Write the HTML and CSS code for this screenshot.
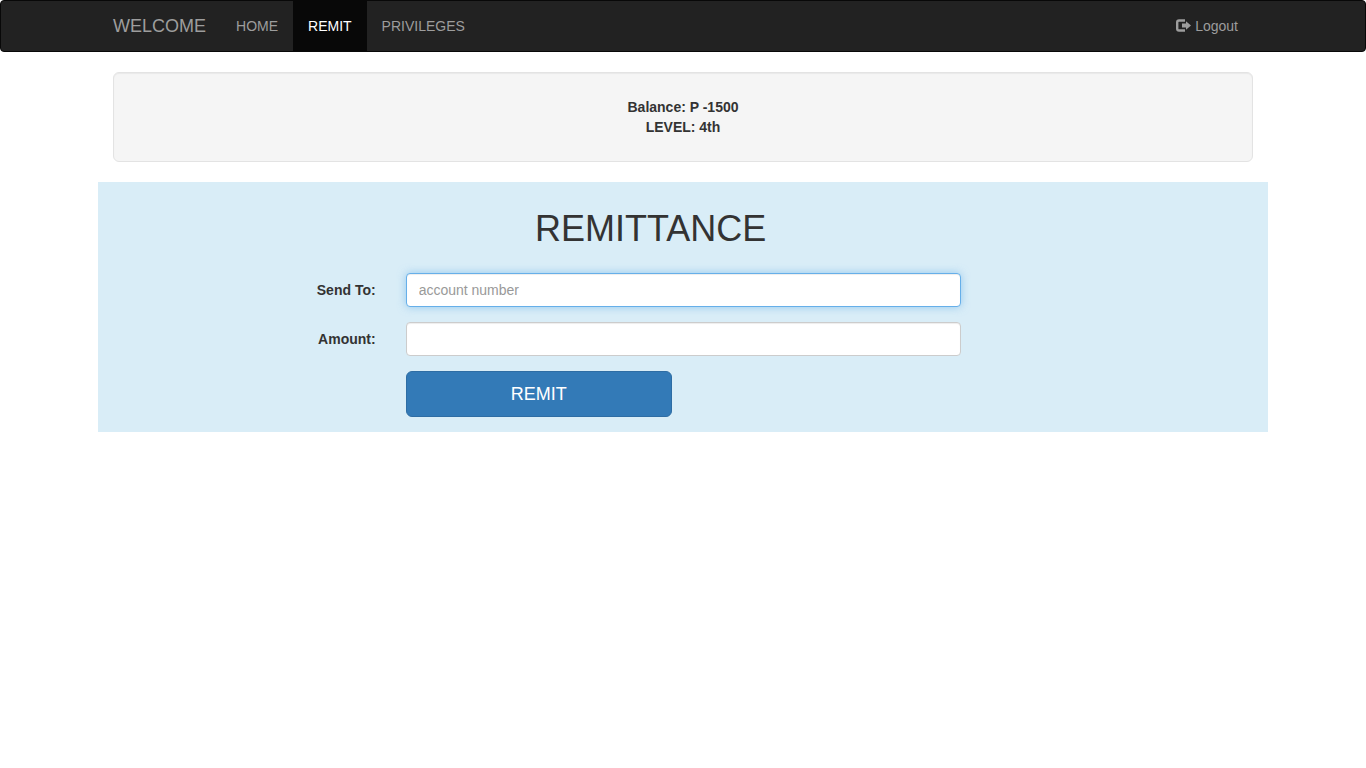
FILE: index.html
```html
<!DOCTYPE html>
<html lang="en">
<head>
<meta charset="utf-8">
<meta name="viewport" content="width=device-width, initial-scale=1">
<title>Remittance</title>
<link rel="stylesheet" href="styles.css">
</head>
<body>
<nav class="navbar">
  <div class="container navbar-inner">
    <a class="brand" href="#">WELCOME</a>
    <ul class="nav">
      <li><a class="nav-link" href="#">HOME</a></li>
      <li><a class="nav-link active" href="#" aria-current="page">REMIT</a></li>
      <li><a class="nav-link" href="#">PRIVILEGES</a></li>
    </ul>
    <a class="nav-link logout" href="#">
      <svg class="icon" viewBox="0 0 15 14" aria-hidden="true"><path d="M9 1.500H3Q1.200 1.500 1.200 3.300v6.400q0 1.800 1.800 1.800H9" fill="none" stroke="currentColor" stroke-width="2.400"/><path d="M6 4.600h4V2.300L15 6.500 10 10.700V8.500H6z" fill="currentColor"/></svg>
      <span>Logout</span>
    </a>
  </div>
</nav>
<main class="container">
  <section class="well">
    <div>Balance: P -1500</div>
    <div>LEVEL: 4th</div>
  </section>
  <section class="panel">
    <form class="form">
      <h1 class="title">REMITTANCE</h1>
      <label class="label" for="account">Send To:</label>
      <input class="field focused" id="account" type="text" placeholder="account number">
      <label class="label" for="amount">Amount:</label>
      <input class="field" id="amount" type="text">
      <button class="submit" type="submit">REMIT</button>
    </form>
  </section>
</main>
</body>
</html>
```
FILE: styles.css
```css
* { box-sizing: border-box; }

body {
  margin: 0;
  background: #fff;
  color: #333;
  font: 14px/20px "Liberation Sans", Arial, sans-serif;
}

.container {
  width: 100%;
  max-width: 1170px;
  margin: 0 auto;
  padding: 0 15px;
}

.navbar {
  margin-bottom: 20px;
  border: 1px solid #080808;
  border-radius: 4px;
  background: #222;
}

.navbar-inner {
  display: flex;
  flex-wrap: wrap;
}

.brand {
  padding: 15px 15px 15px 0;
  color: #9d9d9d;
  font-size: 18px;
  text-decoration: none;
}

.nav {
  display: flex;
  margin: 0;
  padding: 0;
  list-style: none;
}

.nav-link {
  display: block;
  padding: 15px;
  color: #9d9d9d;
  text-decoration: none;
}

.nav-link.active {
  background: #080808;
  color: #fff;
}

.logout {
  display: flex;
  align-items: center;
  gap: 4px;
  margin-left: auto;
}

.icon {
  width: 15px;
  height: 14px;
}

.well {
  margin-bottom: 20px;
  padding: 24px;
  border: 1px solid #e3e3e3;
  border-radius: 6px;
  background: #f5f5f5;
  box-shadow: inset 0 1px 1px rgba(0, 0, 0, .05);
  font-weight: bold;
  text-align: center;
}

.panel {
  margin: 0 -15px;
  padding: 27px 0 15px;
  background: #d9edf7;
}

.form {
  display: grid;
  grid-template-columns: 2fr 9fr 1fr;
  gap: 15px 0;
  width: 66.6667%;
  margin-left: 13.9%;
}

.title {
  grid-column: 1 / -1;
  margin: 0 0 9px;
  font-size: 36px;
  font-weight: normal;
  line-height: 40px;
  text-align: center;
}

.label {
  grid-column: 1;
  padding: 7px 15px 7px 0;
  font-weight: bold;
  text-align: right;
}

.field {
  grid-column: 2;
  height: 34px;
  margin: 0 15px;
  padding: 6px 12px;
  border: 1px solid #ccc;
  border-radius: 4px;
  background: #fff;
  box-shadow: inset 0 1px 1px rgba(0, 0, 0, .075);
  color: #555;
  font: inherit;
}

.field::placeholder {
  color: #999;
  opacity: 1;
}

.field:focus,
.field.focused {
  border-color: #66afe9;
  outline: 0;
  box-shadow: inset 0 1px 1px rgba(0, 0, 0, .075), 0 0 8px rgba(102, 175, 233, .6);
}

.submit {
  grid-column: 2;
  width: 45.5%;
  height: 46px;
  margin-left: 15px;
  padding: 10px 16px;
  border: 1px solid #2e6da4;
  border-radius: 6px;
  background: #337ab7;
  color: #fff;
  font: 18px/24px "Liberation Sans", Arial, sans-serif;
  cursor: pointer;
}
```
